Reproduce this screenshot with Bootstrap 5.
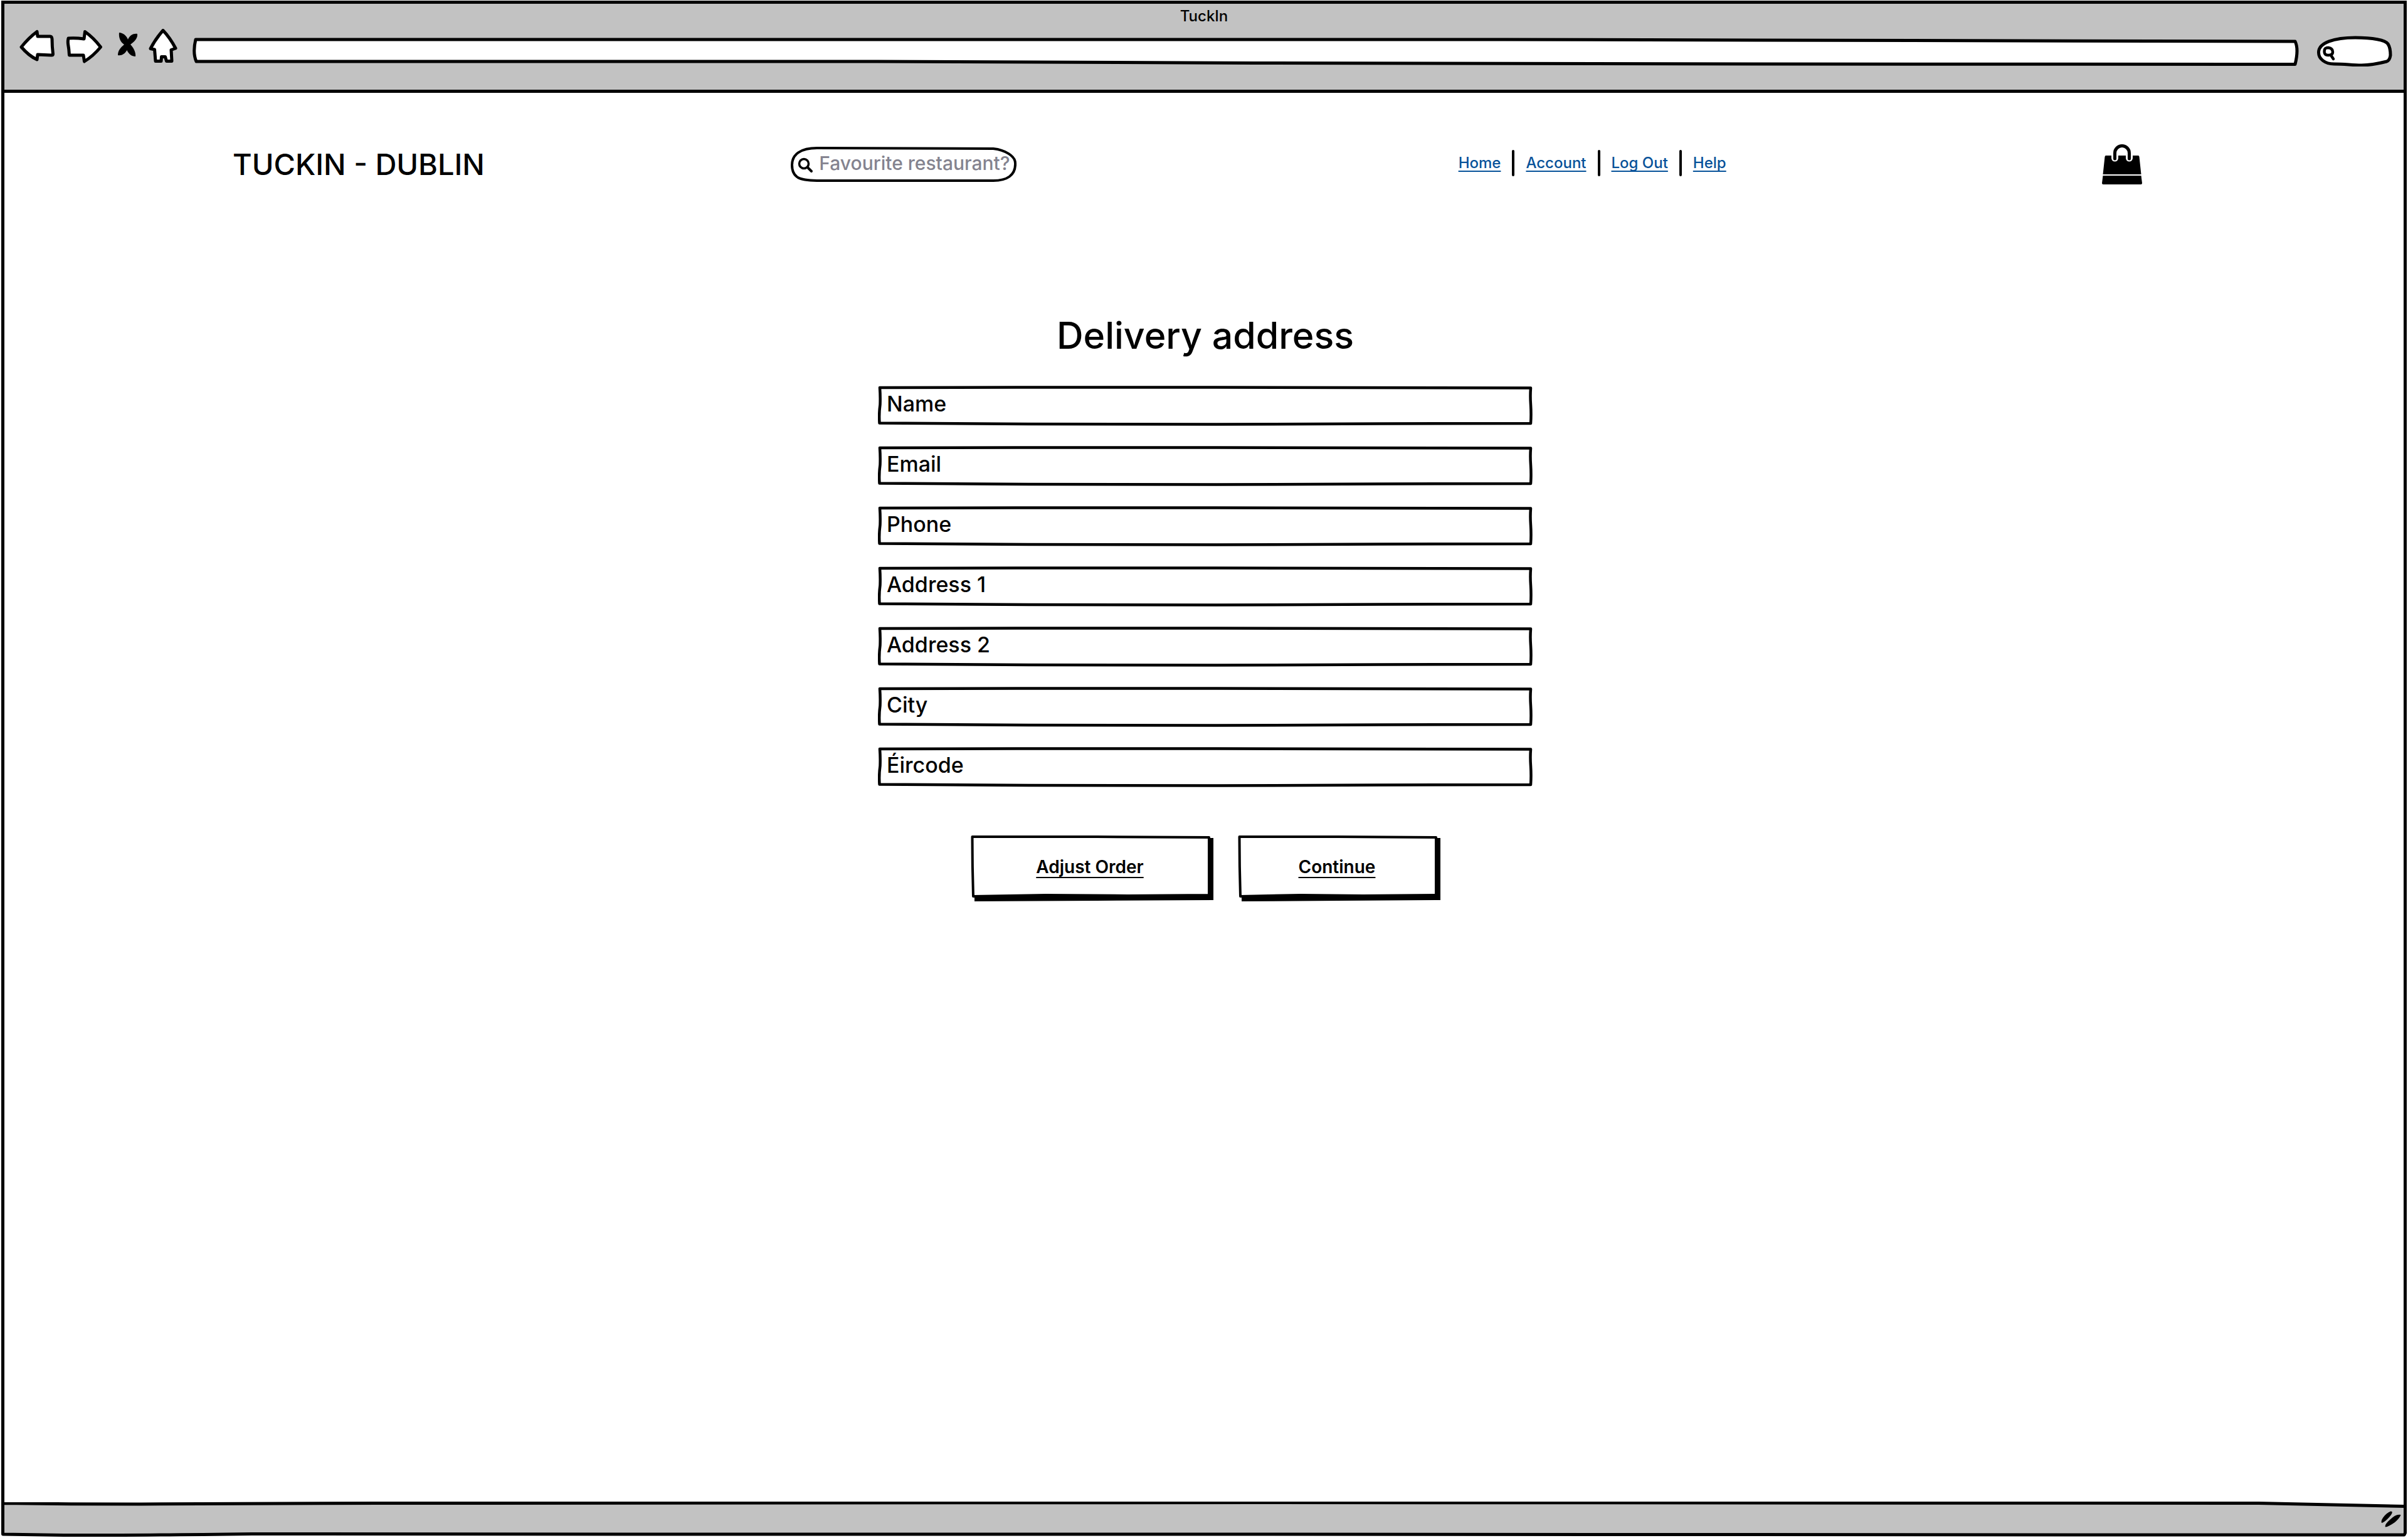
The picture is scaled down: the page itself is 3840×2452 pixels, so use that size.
<!DOCTYPE html>
<html lang="en">
<head>
<meta charset="utf-8">
<meta name="viewport" content="width=device-width, initial-scale=1">
<title>TuckIn</title>
<link href="https://cdn.jsdelivr.net/npm/bootstrap@5.3.0/dist/css/bootstrap.min.css" rel="stylesheet">
<style>
  body { font-family: Inter, "Noto Sans", sans-serif; font-weight: 500; color: #000; background: #fff; }

  /* Sketched browser window */
  .sketch-window { padding: 1px 2px 2px; }
  .window-frame { border: 5px solid #000; border-bottom: 0; }
  .chrome-top { background: #c2c2c2; border-bottom: 5px solid #000; padding: 6px 0 37px; }
  .chrome-title { font-size: 24px; line-height: 28px; }
  .chrome-tools { gap: 18px; margin-top: 6px; padding: 0 14px 0 24px; }
  .sketch-box { border: 0; border-radius: 0; background: transparent center / 100% 100% no-repeat; color: #000; font-weight: 500; }
  .sketch-box:focus { box-shadow: none; background-color: transparent; }
  .address-box {
    height: 60px; padding: 0 20px; font-size: 24px;
    background-image: url("data:image/svg+xml,%3Csvg xmlns='http://www.w3.org/2000/svg' viewBox='307 46 3360 60' preserveAspectRatio='none'%3E%3Cpath d='M312 63L2400 63L3660 66Q3666 78 3660 102.500L2800 102L2000 100.500L1400 98L313 98Q307 84 312 63Z' fill='white' stroke='black' stroke-width='5' stroke-linejoin='round'/%3E%3C/svg%3E");
  }
  .chrome-search {
    width: 134px; height: 60px; padding: 0 16px 0 46px; font-size: 24px;
    background-image: url("data:image/svg+xml,%3Csvg xmlns='http://www.w3.org/2000/svg' viewBox='185 46 134 60' preserveAspectRatio='none'%3E%3Cpath d='M197.500 83C198 68 222 60 256 60C284 60 304 64 308 70C312 76 312 82 312 88Q311 96 306 98C290 102 280 104 266 104C250 104 240 102 222 102C208 102 197 94 197.500 83Z' fill='white' stroke='black' stroke-width='5'/%3E%3Cpath d='M207 79Q208 76 213 76Q220 77 220 83Q220 88 213 88Q205 88 207 79ZM217 88L221 94' fill='none' stroke='black' stroke-width='4.500' stroke-linecap='round'/%3E%3C/svg%3E");
  }
  .tool-btn { line-height: 0; }

  /* A label that sits inside its text box until something is typed */
  .inset-field { display: grid; }
  .inset-field > * { grid-area: 1 / 1; }
  .inset-field label { z-index: 1; align-self: center; justify-self: start; pointer-events: none; white-space: nowrap; }
  .inset-field input:not(:placeholder-shown) + label { visibility: hidden; }

  /* Site header */
  .site-bar { display: grid; grid-template-columns: 890fr 1064fr 1026fr 64fr; align-items: center; padding: 82px 417px 0 364px; }
  .site-brand { font-size: 47px; line-height: 64px; color: #000; }
  .search-field { width: 360px; font-size: 30px; line-height: 40px; }
  .search-field label { padding: 0 0 4px 45px; color: #84838f; }
  .site-search {
    height: 56px; padding: 0 6px 4px 45px;
    background-image: url("data:image/svg+xml,%3Csvg xmlns='http://www.w3.org/2000/svg' viewBox='22 24 360 56' preserveAspectRatio='none'%3E%3Cpath d='M24 53C24 36 38 26 64 26L345 27C364 29 380 39 380 50C381 70 366 78 345 78L70 78C40 78 24 76 24 53Z' fill='white' stroke='black' stroke-width='4'/%3E%3Ccircle cx='43' cy='51' r='7.500' fill='none' stroke='black' stroke-width='3.500'/%3E%3Cpath d='M49 57L55 63' stroke='black' stroke-width='4' stroke-linecap='round'/%3E%3C/svg%3E");
  }
  .site-links { gap: 18px; padding-bottom: 5px; }
  .site-links a { font-size: 24px; line-height: 32px; color: #07529a; text-decoration: underline 2px; text-underline-offset: 4px; text-decoration-skip-ink: none; }
  .link-rule { width: 4px; height: 42px; border-radius: 2px; background: #000; }

  /* Delivery form */
  .delivery { width: 1044px; max-width: 100%; margin-top: 205px; }
  .delivery-title { font-size: 59px; line-height: 72px; font-weight: 500; margin-bottom: 44px; }
  .field-stack { gap: 32px; font-size: 34px; line-height: 44px; }
  .field-stack label { padding: 0 0 6px 14px; }
  .field-box {
    height: 64px; padding: 0 14px 6px;
    background-image: url("data:image/svg+xml,%3Csvg xmlns='http://www.w3.org/2000/svg' viewBox='0 0 1044 64' preserveAspectRatio='none'%3E%3Cpath d='M3 3L220 2.500L540 2.500L1041 3.500Q1040 16 1041 30Q1042 46 1041 60L800 60.500L540 61.500L240 61L2.500 59.500Q1.500 44 3.500 30Q4 16 3 3Z' fill='white' stroke='black' stroke-width='4.500' stroke-linejoin='round'/%3E%3C/svg%3E");
  }
  .action-row { gap: 39px; margin-top: 76px; }
  .sketch-btn {
    height: 106px; padding: 0 6px 4px 0; font-size: 28px; line-height: 36px; font-weight: 600;
    text-decoration: underline 2px; text-underline-offset: 6px; text-decoration-skip-ink: none;
  }
  .sketch-btn:hover { background-color: transparent; }
  .btn-adjust {
    width: 387px;
    background-image: url("data:image/svg+xml,%3Csvg xmlns='http://www.w3.org/2000/svg' viewBox='0 0 387 106' preserveAspectRatio='none'%3E%3Cpath d='M6 10H381V5H387V104L200 105L6 106Z'/%3E%3Cpath d='M2.500 3L200 3L380 4V96L250 97L120 96L4 98Q2.500 50 2.500 3Z' fill='white' stroke='black' stroke-width='4' stroke-linejoin='round'/%3E%3C/svg%3E");
  }
  .btn-continue {
    width: 323px;
    background-image: url("data:image/svg+xml,%3Csvg xmlns='http://www.w3.org/2000/svg' viewBox='0 0 323 106' preserveAspectRatio='none'%3E%3Cpath d='M6 10H317V5H323V104L160 105L6 106Z'/%3E%3Cpath d='M2.500 3L160 3L316 4V96L200 97L100 96L4 98Q2.500 50 2.500 3Z' fill='white' stroke='black' stroke-width='4' stroke-linejoin='round'/%3E%3C/svg%3E");
  }

  /* Status bar */
  .chrome-bottom {
    height: 56px; padding-right: 8px;
    background: center / 100% 100% no-repeat url("data:image/svg+xml,%3Csvg xmlns='http://www.w3.org/2000/svg' viewBox='0 0 3836 56' preserveAspectRatio='none'%3E%3Cpath d='M2.500 2.500Q110 4 220 4L600 2.500L2000 1.500L3600 2.500L3833.500 7.500V53L3400 53L2000 52L1000 52L400 51.500Q200 54 100 53.500L3 52Z' fill='%23c2c2c2'/%3E%3Cpath d='M2.500 0V52L100 53.500Q200 54 400 51.500L1000 52L2000 52L3400 53L3832 53L3833.500 50V0M2.500 2.500Q110 4 220 4L600 2.500L2000 1.500L3600 2.500L3833.500 7.500' fill='none' stroke='black' stroke-width='5' stroke-linejoin='round'/%3E%3C/svg%3E");
  }
</style>
</head>
<body>
<div class="sketch-window min-vh-100 d-flex flex-column">
  <div class="window-frame flex-grow-1 d-flex flex-column">

    <header class="chrome-top">
      <div class="chrome-title text-center">TuckIn</div>
      <div class="chrome-tools d-flex align-items-center">
        <button type="button" class="tool-btn border-0 bg-transparent p-0" aria-label="Back">
          <svg width="56" height="60" viewBox="31 46 56 60" fill="#fff" stroke="#000" stroke-width="5" stroke-linejoin="round"><path d="M34 75Q46 60 59 50.500L60 58L80 58Q82.500 58 83 62Q83 74 84.500 86Q84.500 88 82 88L60 87L59 95Q46 89 34 75Z"/></svg>
        </button>
        <button type="button" class="tool-btn border-0 bg-transparent p-0" aria-label="Forward">
          <svg width="58" height="60" viewBox="105 46 58 60" fill="#fff" stroke="#000" stroke-width="5" stroke-linejoin="round"><path d="M109 61Q120 60 134 62L135.500 50.500Q149 60 160.500 75Q149 89 134.500 98L133 88Q122 88 110.500 88Q110 78 108.500 70Q108 65 109 61Z"/></svg>
        </button>
        <button type="button" class="tool-btn border-0 bg-transparent p-0" aria-label="Stop">
          <svg width="38" height="60" viewBox="181 46 38 60"><path d="M190 52C196 52 202 57 204 63C207 56 213 53 219 54C220 61 214 67 208 71C213 76 217 84 216 90C210 90 205 86 202.500 80C199 86 194 89 188 88C188 81 192 76 198 71C192 67 189 60 190 52Z"/></svg>
        </button>
        <button type="button" class="tool-btn border-0 bg-transparent p-0" aria-label="Home">
          <svg width="52" height="60" viewBox="237 46 52 60" fill="#fff" stroke="#000" stroke-width="5" stroke-linejoin="round"><path d="M260 48.500Q271 60 280 77L273 79.500L274 97.500L265.500 97.500L263.500 90.500L257.500 90.500L257 97.500L248 97.500L246.500 79L240 77.500Q248 62 260 48.500Z"/></svg>
        </button>
        <input type="text" class="sketch-box address-box flex-grow-1" aria-label="Address">
        <input type="search" class="sketch-box chrome-search" aria-label="Search the web">
      </div>
    </header>

    <div class="site-bar">
      <a href="#" class="site-brand text-decoration-none">TUCKIN - DUBLIN</a>
      <div class="inset-field search-field">
        <input type="text" id="restaurant" class="sketch-box site-search w-100" placeholder=" ">
        <label for="restaurant">Favourite restaurant?</label>
      </div>
      <nav class="site-links d-flex align-items-center" aria-label="Main">
        <a href="#">Home</a>
        <span class="link-rule"></span>
        <a href="#">Account</a>
        <span class="link-rule"></span>
        <a href="#">Log Out</a>
        <span class="link-rule"></span>
        <a href="#">Help</a>
      </nav>
      <a href="#" class="d-block lh-1" aria-label="Basket">
        <svg class="d-block" width="64" height="64" viewBox="52 30 64 64"><path d="M58 48H110Q111 48 111.500 50L114.500 78H53.500L56.500 50Q57 48 58 48ZM53.500 80H114.500L116 92Q116 94 114 94H54Q52 94 52 92Z"/><path d="M72.500 52V44A11.500 11.500 0 0 1 95.500 44V52" fill="none" stroke="#fff" stroke-width="11" stroke-linecap="round"/><path d="M72.500 53V44A11.500 11.500 0 0 1 95.500 44V53" fill="none" stroke="#000" stroke-width="5" stroke-linecap="round"/></svg>
      </a>
    </div>

    <main class="flex-grow-1 d-flex justify-content-center ps-1">
      <form class="delivery">
        <h1 class="delivery-title text-center">Delivery address</h1>
        <div class="field-stack d-flex flex-column">
          <div class="inset-field">
            <input type="text" id="name" class="sketch-box field-box w-100" placeholder=" ">
            <label for="name">Name</label>
          </div>
          <div class="inset-field">
            <input type="email" id="email" class="sketch-box field-box w-100" placeholder=" ">
            <label for="email">Email</label>
          </div>
          <div class="inset-field">
            <input type="tel" id="phone" class="sketch-box field-box w-100" placeholder=" ">
            <label for="phone">Phone</label>
          </div>
          <div class="inset-field">
            <input type="text" id="address1" class="sketch-box field-box w-100" placeholder=" ">
            <label for="address1">Address 1</label>
          </div>
          <div class="inset-field">
            <input type="text" id="address2" class="sketch-box field-box w-100" placeholder=" ">
            <label for="address2">Address 2</label>
          </div>
          <div class="inset-field">
            <input type="text" id="city" class="sketch-box field-box w-100" placeholder=" ">
            <label for="city">City</label>
          </div>
          <div class="inset-field">
            <input type="text" id="eircode" class="sketch-box field-box w-100" placeholder=" ">
            <label for="eircode">Éircode</label>
          </div>
        </div>
        <div class="action-row d-flex justify-content-center">
          <button type="button" class="btn sketch-box sketch-btn btn-adjust">Adjust Order</button>
          <button type="submit" class="btn sketch-box sketch-btn btn-continue">Continue</button>
        </div>
      </form>
    </main>
  </div>

  <footer class="chrome-bottom d-flex justify-content-end align-items-center">
    <svg width="34" height="28" viewBox="196 43 34 28" aria-hidden="true"><path d="M198 63Q196 59 203 51Q211 43 214.500 45Q216 48 208 56Q202 62 198 63ZM204 69.500Q202 66 211 58Q221 48 228.500 50Q227 55 219 62Q209 69 204 69.500Z"/></svg>
  </footer>
</div>
<script src="https://cdn.jsdelivr.net/npm/bootstrap@5.3.0/dist/js/bootstrap.bundle.min.js"></script>
</body>
</html>
